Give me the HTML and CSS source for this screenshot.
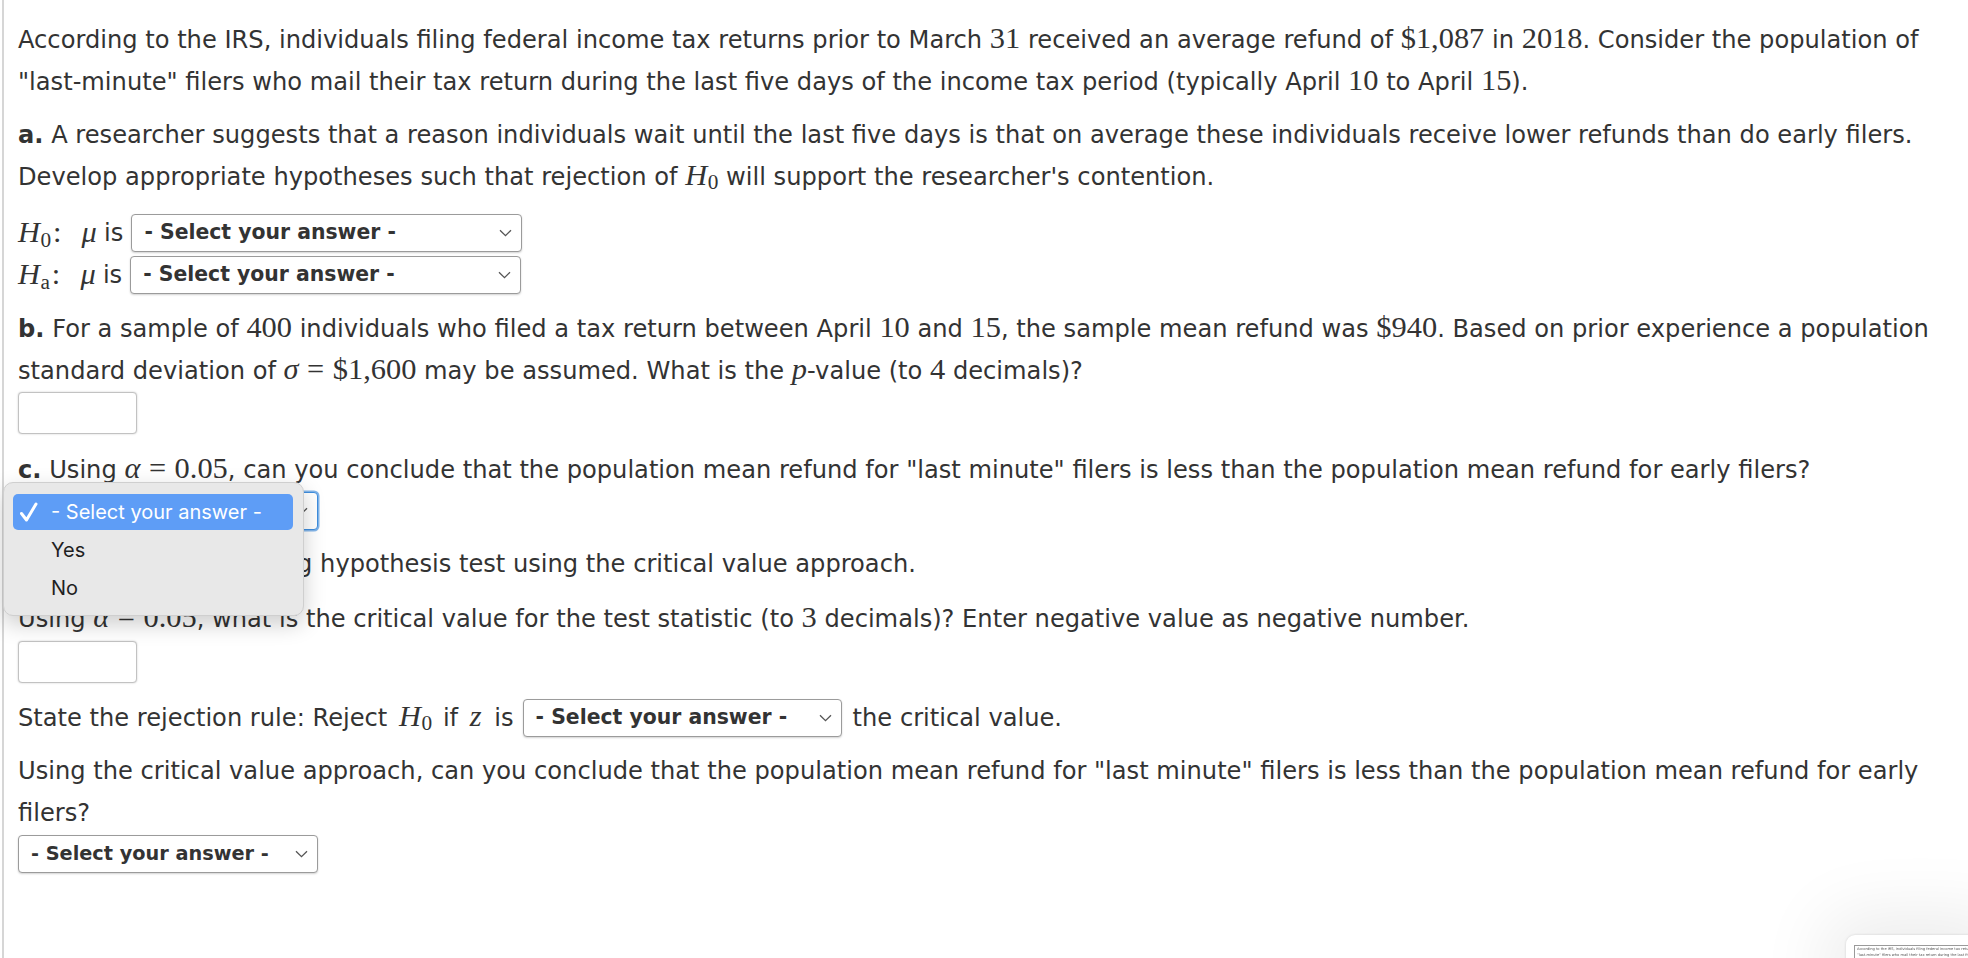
FILE: index.html
```html
<!DOCTYPE html>
<html lang="en">
<head>
<meta charset="utf-8">
<title>Hypothesis test – last-minute filers</title>
<link rel="stylesheet" href="styles.css">
</head>
<body>
<main class="page">
  <p class="para">According to the IRS, individuals filing federal income tax returns prior to March <span class="mn">31</span> received an average refund of <span class="mn">$1,087</span> in <span class="mn">2018</span>. Consider the population of "last-minute" filers who mail their tax return during the last five days of the income tax period (typically April <span class="mn">10</span> to April <span class="mn">15</span>).</p>

  <p class="para gap-a"><b>a.</b> A researcher suggests that a reason individuals wait until the last five days is that on average these individuals receive lower refunds than do early filers. Develop appropriate hypotheses such that rejection of <span class="mth"><span class="mi">H</span><span class="sub">0</span></span> will support the researcher's contention.</p>

  <div class="hyp gap-h">
    <div class="hyp-row">
      <span class="mth"><span class="mi">H</span><span class="sub">0</span><span class="colon">:</span><span class="mi">μ</span></span>
      <span class="is">is</span>
      <div class="select select-wide"><span class="select-label">- Select your answer -</span><svg class="chev" width="13" height="8" viewBox="0 0 13 8"><path d="M1 1.2l5.5 5.5L12 1.2" fill="none" stroke="#555" stroke-width="1.3"/></svg></div>
    </div>
    <div class="hyp-row">
      <span class="mth"><span class="mi">H</span><span class="sub sub-up">a</span><span class="colon">:</span><span class="mi">μ</span></span>
      <span class="is">is</span>
      <div class="select select-wide"><span class="select-label">- Select your answer -</span><svg class="chev" width="13" height="8" viewBox="0 0 13 8"><path d="M1 1.2l5.5 5.5L12 1.2" fill="none" stroke="#555" stroke-width="1.3"/></svg></div>
    </div>
  </div>

  <p class="para gap-b"><b>b.</b> For a sample of <span class="mn">400</span> individuals who filed a tax return between April <span class="mn">10</span> and <span class="mn">15</span>, the sample mean refund was <span class="mn">$940</span>. Based on prior experience a population standard deviation of <span class="mth"><span class="mi">σ</span><span class="rel">=</span><span class="mn-in">$1,600</span></span> may be assumed. What is the <span class="mi">p</span>-value (to <span class="mn">4</span> decimals)?</p>
  <div class="text-input"></div>

  <p class="para gap-c"><b>c.</b> Using <span class="mth"><span class="mi">α</span><span class="rel">=</span><span class="mn-in">0.05</span></span>, can you conclude that the population mean refund for "last minute" filers is less than the population mean refund for early filers?</p>
  <div class="select-wrap gap-1">
    <div class="select select-short select-focus"><span class="select-label">- Select your answer -</span><svg class="chev" width="13" height="8" viewBox="0 0 13 8"><path d="M1 1.2l5.5 5.5L12 1.2" fill="none" stroke="#555" stroke-width="1.3"/></svg></div>
    <div class="menu">
      <div class="menu-item menu-item-active"><span class="check"><svg width="20" height="22" viewBox="0 0 20 22"><path d="M2.5 12.5l5 6.5L17 3" fill="none" stroke="#ffffff" stroke-width="3" stroke-linecap="round" stroke-linejoin="round"/></svg></span><span>- Select your answer -</span></div>
      <div class="menu-item"><span class="check"></span><span>Yes</span></div>
      <div class="menu-item"><span class="check"></span><span>No</span></div>
    </div>
  </div>

  <p class="para gap-d"><b>d.</b> Repeat the preceding hypothesis test using the critical value approach.</p>

  <p class="para gap-e">Using <span class="mth"><span class="mi">α</span><span class="rel">=</span><span class="mn-in">0.05</span></span>, what is the critical value for the test statistic (to <span class="mn">3</span> decimals)? Enter negative value as negative number.</p>
  <div class="text-input gap-1"></div>

  <div class="rule-row gap-f">
    <span>State the rejection rule: Reject <span class="mth rule-math"><span class="mi">H</span><span class="sub">0</span></span> if <span class="mi rule-z">z</span> is</span>
    <div class="select select-mid"><span class="select-label">- Select your answer -</span><svg class="chev" width="13" height="8" viewBox="0 0 13 8"><path d="M1 1.2l5.5 5.5L12 1.2" fill="none" stroke="#555" stroke-width="1.3"/></svg></div>
    <span>the critical value.</span>
  </div>

  <p class="para gap-g">Using the critical value approach, can you conclude that the population mean refund for "last minute" filers is less than the population mean refund for early filers?</p>
  <div class="select select-short gap-1"><span class="select-label">- Select your answer -</span><svg class="chev" width="13" height="8" viewBox="0 0 13 8"><path d="M1 1.2l5.5 5.5L12 1.2" fill="none" stroke="#555" stroke-width="1.3"/></svg></div>
</main>

<aside class="thumb">
  <div class="thumb-shot">
    <div class="thumb-line">According to the IRS, individuals filing federal income tax returns prior to March 31</div>
    <div class="thumb-line">"last-minute" filers who mail their tax return during the last five days of the income</div>
  </div>
</aside>
</body>
</html>
```

FILE: styles.css
```css
html, body {
  margin: 0;
  padding: 0;
  background: #ffffff;
}

body {
  color: #333333;
  font-family: "DejaVu Sans", Verdana, sans-serif;
  font-size: 24.15px;
  line-height: 42px;
  overflow: hidden;
  width: 1968px;
  height: 958px;
}

.page {
  margin-left: 2px;
  border-left: 2px solid #d6d6d6;
  min-height: 958px;
  box-sizing: border-box;
  padding: 19px 10px 0 14px;
  display: flex;
  flex-direction: column;
  align-items: flex-start;
}

.para {
  margin: 0;
  line-height: 42px;
}

.para b { font-weight: bold; }

.gap-a { margin-top: 10.5px; }
.gap-h { margin-top: 14px; }
.gap-b { margin-top: 12px; }
.gap-c { margin-top: 15px; }
.gap-1 { margin-top: 1px; }
.gap-d { margin-top: 13px; }
.gap-e { margin-top: 13px; }
.gap-f { margin-top: 14px; }
.gap-g { margin-top: 11px; }

/* math */
.mn, .mn-in {
  font-family: "Liberation Serif", "Times New Roman", serif;
  line-height: 1;
}
.mn { font-size: 1.26em; }
.mth {
  font-family: "Liberation Serif", "Times New Roman", serif;
  font-size: 1.26em;
  line-height: 1;
  white-space: nowrap;
}
.mth .mi { font-size: 1em; }
.mi {
  font-family: "Liberation Serif", "Times New Roman", serif;
  font-style: italic;
  font-size: 1.26em;
  line-height: 1;
}
.sub {
  font-size: 0.7em;
  position: relative;
  top: 0.22em;
  margin-left: 0.03em;
}
.sub-up { font-style: normal; }
.rel { margin: 0 0.28em; }
.colon { margin: 0 0.66em 0 0.06em; }

.rule-math { margin: 0 3px 0 4px; }
.rule-z { margin: 0 5px 0 4px; }

/* hypothesis rows */
.hyp {
  display: flex;
  flex-direction: column;
}
.hyp-row {
  height: 42px;
  display: flex;
  align-items: center;
}
.is { margin-left: 0.3em; }
.hyp-row .select { margin-left: 8px; }

/* selects */
.select {
  box-sizing: border-box;
  height: 38px;
  display: flex;
  align-items: center;
  justify-content: space-between;
  padding: 0 9px 0 12px;
  background: #ffffff;
  border: 1px solid #9b9b9b;
  border-radius: 4px;
  box-shadow: 0 1px 2px rgba(0, 0, 0, 0.18);
  font-weight: bold;
  font-size: 20.4px;
  line-height: 1;
  color: #333333;
}
.select-wide { width: 391px; }
.select-mid { width: 319px; margin: 0 11px 0 9px; }
.select-short { width: 300px; font-size: 19.3px; }
.select-focus {
  border-color: #3f8ede;
  box-shadow: 0 0 0 1.5px rgba(63, 142, 222, 0.65);
}
.chev { flex: none; }

.text-input {
  box-sizing: border-box;
  width: 119px;
  height: 42px;
  background: #ffffff;
  border: 1px solid #c2c2c2;
  border-radius: 4px;
  box-shadow: 0 0 2px rgba(0, 0, 0, 0.22);
}

.rule-row {
  height: 42px;
  display: flex;
  align-items: center;
  white-space: nowrap;
}

/* open dropdown menu */
.select-wrap {
  position: relative;
}
.menu {
  position: absolute;
  left: -15px;
  top: -10px;
  width: 301px;
  height: 134px;
  box-sizing: border-box;
  padding: 11px 10px 0 9px;
  background: #e8e8e8;
  border: 1px solid #cfcfcf;
  border-radius: 10px;
  box-shadow: 0 8px 22px rgba(0, 0, 0, 0.2);
  z-index: 10;
  display: flex;
  flex-direction: column;
  gap: 2px;
  font-family: Inter, "Liberation Sans", sans-serif;
  font-size: 20px;
  color: #1f1f1f;
}
.menu-item {
  height: 36px;
  display: flex;
  align-items: center;
  border-radius: 5px;
  padding-left: 6px;
}
.menu-item-active {
  background: #5e9df6;
  color: #ffffff;
}
.check {
  width: 32px;
  height: 22px;
  flex: none;
  display: flex;
  align-items: center;
}

/* screenshot thumbnail in the corner */
.thumb {
  position: fixed;
  left: 1846px;
  top: 935px;
  width: 140px;
  height: 60px;
  background: #ffffff;
  border-radius: 9px 0 0 0;
  box-shadow: 0 0 70px 20px rgba(0, 0, 0, 0.08), 0 0 3px rgba(0, 0, 0, 0.15);
  padding: 10px 0 0 8px;
  box-sizing: border-box;
}
.thumb-shot {
  border-left: 1px solid #9a9a9a;
  border-top: 1px solid #9a9a9a;
  height: 40px;
  padding: 1px 0 0 2px;
  overflow: hidden;
}
.thumb-line {
  font-family: "DejaVu Sans", sans-serif;
  font-size: 3.6px;
  line-height: 5.5px;
  color: #555555;
  white-space: nowrap;
}
```
